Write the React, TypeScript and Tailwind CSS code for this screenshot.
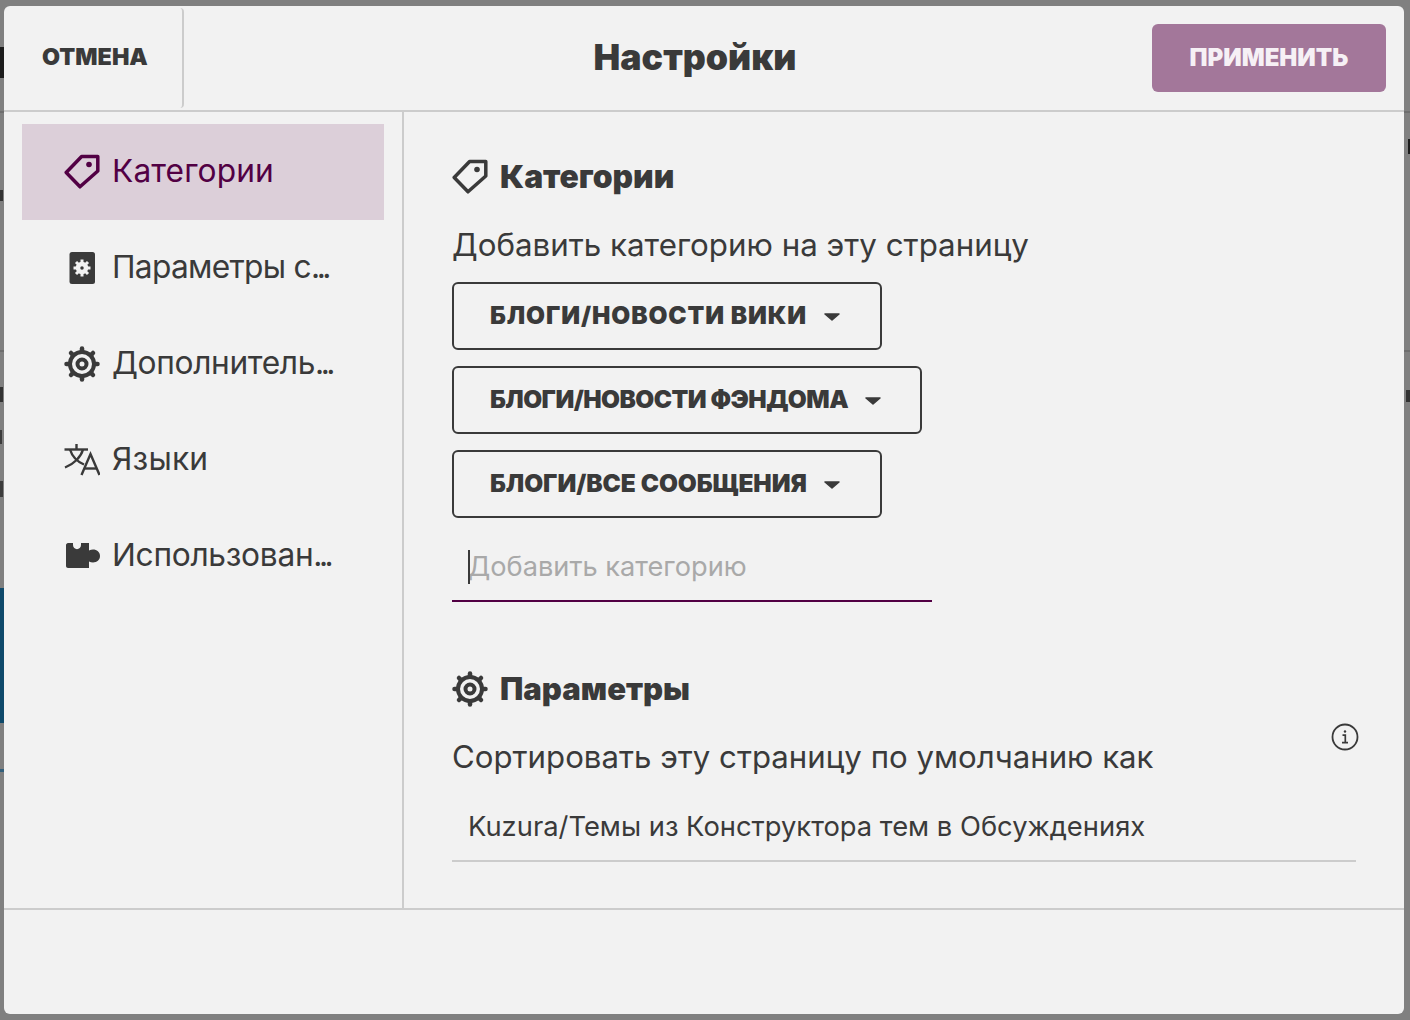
import React from 'react';

const TagIcon: React.FC<{ className?: string }> = ({ className }) => (
  <svg viewBox="0 0 36 36" className={className} fill="none" stroke="currentColor" strokeWidth="3.500" strokeLinejoin="round">
    <path d="M2.200 18.500 L17.600 2.500 H33.800 V17 L16 32.800 Z" />
    <circle cx="25" cy="10.500" r="2.800" fill="currentColor" stroke="none" />
  </svg>
);

const GearIcon: React.FC<{ className?: string }> = ({ className }) => (
  <svg viewBox="0 0 36 36" className={className} fill="none" stroke="currentColor">
    <circle cx="18" cy="18" r="12" strokeWidth="4" />
    <circle cx="18" cy="18" r="4.500" strokeWidth="4" />
    <g strokeWidth="4.500" strokeLinecap="round">
      <path d="M18 2.500 V5" />
      <path d="M18 31 V33.500" />
      <path d="M2.500 18 H5" />
      <path d="M31 18 H33.500" />
      <path d="M7 7 L8.800 8.800" />
      <path d="M27.200 27.200 L29 29" />
      <path d="M7 29 L8.800 27.200" />
      <path d="M27.200 8.800 L29 7" />
    </g>
  </svg>
);

const PageGearIcon: React.FC<{ className?: string }> = ({ className }) => (
  <svg viewBox="0 0 36 36" className={className}>
    <rect x="5.500" y="2" width="25.500" height="32" rx="2.500" fill="currentColor" />
    <g fill="none" stroke="#f2f2f2">
      <circle cx="18" cy="18" r="4" strokeWidth="4.500" />
      <g strokeWidth="3">
        <path d="M18 9.500 V13" />
        <path d="M18 23 V26.500" />
        <path d="M9.500 18 H13" />
        <path d="M23 18 H26.500" />
        <path d="M12 12 L14.500 14.500" />
        <path d="M21.500 21.500 L24 24" />
        <path d="M12 24 L14.500 21.500" />
        <path d="M21.500 14.500 L24 12" />
      </g>
    </g>
  </svg>
);

const TranslateIcon: React.FC<{ className?: string }> = ({ className }) => (
  <svg viewBox="0 0 36 36" className={className} fill="none" stroke="currentColor" strokeWidth="2.400">
    <path d="M12.500 2 V7" />
    <path d="M0.500 7.500 H24" />
    <path d="M19 7.500 C17 15 10 22 1 25.500" />
    <path d="M6 7.500 C8 14 13 19.500 20 22.500" />
    <path d="M17.500 33 L26.500 12 L35.500 33" />
    <path d="M20.500 26.500 H32.500" />
  </svg>
);

const PuzzleIcon: React.FC<{ className?: string }> = ({ className }) => (
  <svg viewBox="0 0 36 36" className={className} fill="currentColor">
    <path d="M2 7 C2 6 3 5 4 5 H9 V7 C9 12.500 17 12.500 17 7 V5 H25 V12.500 C30 10 36 12.500 36 18 C36 23.500 30 26 25 23.500 V30 H4 C3 30 2 29 2 28 Z" />
  </svg>
);

const InfoIcon: React.FC<{ className?: string }> = ({ className }) => (
  <svg viewBox="0 0 28 28" className={className} fill="none" stroke="currentColor">
    <circle cx="14" cy="14" r="12.500" strokeWidth="1.800" />
    <circle cx="14" cy="8.500" r="1.200" fill="currentColor" stroke="none" />
    <path d="M11.500 12.200 H14.300 V19.500 M11 19.700 H17" strokeWidth="1.700" />
  </svg>
);

const Caret: React.FC = () => (
  <svg viewBox="0 0 16 8" className="w-4 h-2 ml-[17px] mt-[4px] shrink-0" fill="currentColor" stroke="currentColor" strokeWidth="1.500" strokeLinejoin="round">
    <path d="M1 1 H15 L8 7 Z" />
  </svg>
);

const navItems = [
  { label: 'Категории', tail: '', icon: TagIcon, active: true, tracking: 'tracking-[0.1px]' },
  { label: 'Параметры с', tail: '...', icon: PageGearIcon, active: false, tracking: 'tracking-[-0.7px]' },
  { label: 'Дополнитель', tail: '...', icon: GearIcon, active: false, tracking: 'tracking-[-0.35px]' },
  { label: 'Языки', tail: '', icon: TranslateIcon, active: false, tracking: 'tracking-[0.2px]' },
  { label: 'Использован', tail: '...', icon: PuzzleIcon, active: false, tracking: 'tracking-[-0.3px]' },
];

const categories = [
  { name: 'Блоги/Новости вики', width: 'w-[430px]', tracking: 'tracking-[0.9px]' },
  { name: 'Блоги/Новости Фэндома', width: 'w-[470px]', tracking: 'tracking-[-0.55px]' },
  { name: 'Блоги/Все сообщения', width: 'w-[430px]', tracking: 'tracking-[-0.05px]' },
];

const App: React.FC = () => {
  return (
    <div className="w-[1410px] h-[1020px] overflow-hidden flex bg-[#808080] font-['Inter','Liberation_Sans',sans-serif] text-[#3a3a3a]">
      {/* полоска страницы за модальным окном, слева */}
      <div className="w-[4px] shrink-0 flex flex-col items-start">
        <div className="mt-[47px] w-[4px] h-[31px] bg-[#1c1c1c]" />
        <div className="mt-[33px] w-[4px] h-[2px] bg-[#6e6e6e]" />
        <div className="mt-[77px] w-[3px] h-[11px] bg-[#333333]" />
        <div className="mt-[149px] w-[4px] h-[2px] bg-[#6e6e6e]" />
        <div className="mt-[35px] w-[3px] h-[15px] bg-[#333333]" />
        <div className="mt-[28px] w-[2px] h-[14px] bg-[#3c3c3c]" />
        <div className="mt-[37px] w-[3px] h-[16px] bg-[#3c3c3c]" />
        <div className="mt-[91px] w-[4px] h-[135px] bg-[#0f4a6b]" />
        <div className="mt-[46px] w-[4px] h-[3px] bg-[#33607c]" />
      </div>

      <div className="w-[1400px] h-[1008px] my-[6px] shrink-0 flex flex-col bg-[#f2f2f2] rounded-md">
        <header className="h-[106px] shrink-0 flex items-center border-b-2 border-[#cccccc]">
          <button className="w-[180px] h-[100px] mt-[-1px] pl-[4px] shrink-0 border-r-2 border-[#cccccc] rounded-r-sm text-[23.3px] font-black">
            ОТМЕНА
          </button>
          <h1 className="flex-1 pl-[54px] mb-[2px] text-center text-[35.7px] leading-[44px] font-black">Настройки</h1>
          <button className="w-[234px] h-[68px] mr-[18px] shrink-0 rounded-md bg-[#a3779a] text-[#f6f0f5] text-[24px] font-black">
            ПРИМЕНИТЬ
          </button>
        </header>

        <div className="h-[798px] shrink-0 flex border-b-2 border-[#cccccc]">
          <nav className="w-[400px] shrink-0 border-r-2 border-[#cccccc] pt-[12px] px-[18px]">
            {navItems.map((item) => {
              const Icon = item.icon;
              return (
                <div
                  key={item.label}
                  className={`h-[96px] flex items-center pl-[42px] gap-[12px] ${item.active ? 'bg-[#dccfd9] text-[#520044]' : ''}`}
                >
                  <Icon className="w-9 h-9 shrink-0" />
                  <span className={`mb-[2px] whitespace-nowrap text-[31.7px] leading-[40px] ${item.tracking}`}>
                    {item.label}
                    {item.tail && <span className="tracking-[-3.5px]">{item.tail}</span>}
                  </span>
                </div>
              );
            })}
          </nav>

          <main className="flex-1 px-[48px] pt-[43px]">
            <div className="flex items-center gap-3 h-[44px]">
              <TagIcon className="w-9 h-9" />
              <h2 className="text-[31.8px] leading-[44px] font-black">Категории</h2>
            </div>
            <p className="mt-[26px] h-[40px] text-[31.3px] leading-[40px]">Добавить категорию на эту страницу</p>

            <div className="mt-[17px] flex flex-col items-start gap-4">
              {categories.map((c) => (
                <button
                  key={c.name}
                  className={`h-[68px] flex items-center pl-[36px] pb-[2px] border-2 border-[#3a3a3a] rounded-md text-[24.5px] font-black uppercase ${c.width} ${c.tracking}`}
                >
                  {c.name}
                  <Caret />
                </button>
              ))}
            </div>

            <div className="relative mt-[16px] w-[480px] h-[68px] border-b-2 border-[#520044]">
              <input
                readOnly
                placeholder="Добавить категорию"
                className="w-full h-[64px] pl-[16px] bg-transparent outline-none text-[27.2px] placeholder:text-[#a9a9a9]"
              />
              {/* курсор в поле */}
              <span className="absolute left-[16px] top-[16px] w-[2px] h-[34px] bg-[#3a3a3a]" />
            </div>

            <div className="mt-[65px] flex items-center gap-3 h-[44px]">
              <GearIcon className="w-9 h-9" />
              <h2 className="text-[31.1px] leading-[44px] font-black">Параметры</h2>
            </div>
            <div className="mt-[26px] h-[40px] flex justify-between items-start mr-[-3px]">
              <p className="text-[31.2px] leading-[40px]">Сортировать эту страницу по умолчанию как</p>
              <InfoIcon className="w-7 h-7 mt-[-14px]" />
            </div>

            <div className="mt-[17px] w-[904px] h-[68px] border-b-2 border-[#cccccc]">
              <input
                readOnly
                value="Kuzura/Темы из Конструктора тем в Обсуждениях"
                className="w-full h-[64px] pl-[16px] bg-transparent outline-none text-[27.35px]"
              />
            </div>
          </main>
        </div>
      </div>

      {/* полоска страницы за модальным окном, справа */}
      <div className="w-[6px] shrink-0 flex flex-col items-end">
        <div className="mt-[111px] w-[6px] h-[2px] bg-[#6e6e6e]" />
        <div className="mt-[26px] w-[2px] h-[15px] bg-[#1c1c1c]" />
        <div className="mt-[196px] w-[6px] h-[2px] bg-[#6e6e6e]" />
        <div className="mt-[38px] w-[4px] h-[12px] bg-[#333333]" />
      </div>
    </div>
  );
};

export default App;
